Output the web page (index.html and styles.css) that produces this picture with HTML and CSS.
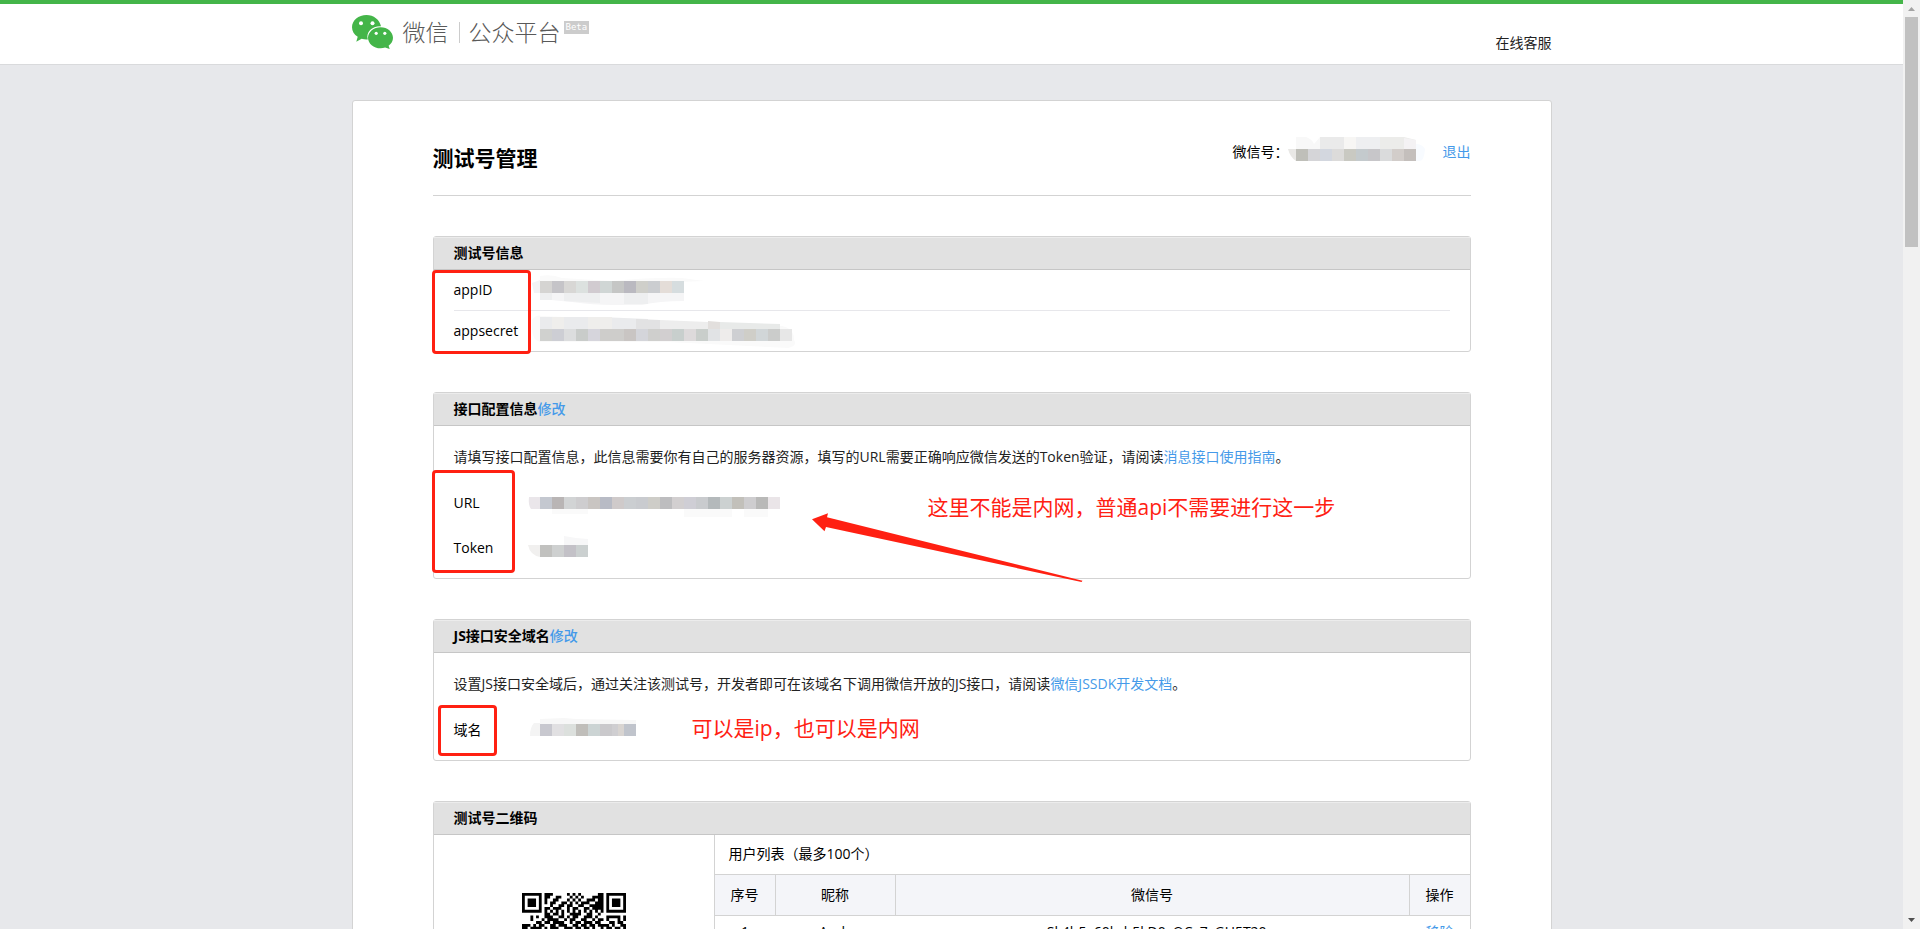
FILE: index.html
```html
<!DOCTYPE html>
<html lang="zh-CN">
<head>
<meta charset="utf-8">
<title>微信公众平台</title>
<link rel="stylesheet" href="styles.css">
</head>
<body>
<div class="window">
<div class="page">
  <header class="head">
    <div class="wrap head-inner">
      <a class="logo" href="#">
        <svg class="logo-mark" viewBox="0 0 41 34" width="41" height="34" aria-hidden="true">
          <path fill="#44b549" d="M14.5 0C6.500 0 0 5.300 0 12.200c0 4 2.200 7.300 5.700 9.600L4.300 26.700l5.300-2.900c1.700.5 3.200.8 4.900.8h1.300C13.600 16.500 20.500 10.900 29 11.300 27.700 4.700 21.600 0 14.500 0z"/>
          <path fill="#44b549" d="M28.600 12.200C21.700 12.200 16 16.900 16 22.700s5.700 10.600 12.600 10.600c1.600 0 3.100-.3 4.500-.8l4.600 1.500-1.100-3.300c2.800-2 4.400-4.700 4.400-8 0-5.800-5.500-10.500-12.400-10.500z"/>
          <circle cx="9" cy="8.300" r="2" fill="#fff"/><circle cx="20.500" cy="8.300" r="2" fill="#fff"/>
          <circle cx="24.200" cy="18.300" r="1.600" fill="#fff"/><circle cx="32.800" cy="18.300" r="1.600" fill="#fff"/>
        </svg>
        <span class="logo-text">微信</span>
        <span class="logo-bar"></span>
        <span class="logo-text">公众平台</span>
        <span class="beta">Beta</span>
      </a>
      <a class="service" href="#">在线客服</a>
    </div>
  </header>

  <main class="wrap card">
    <div class="title-row">
      <h1>测试号管理</h1>
      <div class="account">
        <span>微信号：</span>
        <svg class="mosaic" width="137" height="24" viewBox="0 0 137 24" aria-hidden="true">
          <path fill="#f8f8f8" d="M8 0h10q6 2 8 7l6-7v12H8z"/><path fill="#eaeaea" d="M32 0h24v12H32z"/><path fill="#f7f6f4" d="M56 0h12v12H56z"/><path fill="#eeeff1" d="M68 0h24v12H68z"/><path fill="#ececea" d="M92 0h24l12 3v9H92z"/><path fill="#f4f2f4" d="M116 1l12 2v9h-12z"/>
          <path fill="#e9e8e6" d="M0 12h8v12Q2 20 0 12z"/><path fill="#bfbfb9" d="M8 12h12v12H8z"/><path fill="#d5d5d8" d="M20 12h12v12H20z"/><path fill="#d3d7df" d="M32 12h12v12H32z"/><path fill="#dcdbda" d="M44 12h12v12H44z"/><path fill="#c9c9c2" d="M56 12h12v12H56z"/><path fill="#c4cacd" d="M68 12h12v12H68z"/><path fill="#c7c6c9" d="M80 12h12v12H80z"/><path fill="#dadbdc" d="M92 12h12v12H92z"/><path fill="#d2cdca" d="M104 12h12v12h-12z"/><path fill="#c4bfbc" d="M116 12h12v12h-12z"/><path fill="#f8fbff" d="M128 7q6 0 9 5-1 12-5 12h-4z"/>
        </svg>
        <a href="#">退出</a>
      </div>
    </div>

    <section class="panel">
      <h2>测试号信息</h2>
      <dl class="info">
        <div class="info-row">
          <dt>appID</dt>
          <dd><svg class="mosaic" width="172" height="30" viewBox="0 0 172 30" aria-hidden="true">
            <path fill="#fafafa" d="M8 1Q20-1 30 3l50 3q45-4 70-3l22 3-24 1H8z"/>
            <path fill="#f5f5f6" d="M8 18h144v8q-25 0-42 4H82Q60 30 40 27L8 24z"/><path fill="#eeeff0" d="M8 18h12v7H8zM32 18h36v10l-36-2zM92 18h24v11H92z"/>
            <path fill="#f3f3f5" d="M0 8l8-3v13H2z"/><path fill="#d5d4d2" d="M8 6h12v12H8z"/><path fill="#c5c4c8" d="M20 6h12v12H20z"/><path fill="#d8d7d5" d="M32 6h12v12H32z"/><path fill="#dce1df" d="M44 6h12v12H44z"/><path fill="#d1cbd0" d="M56 6h12v12H56z"/><path fill="#d0d6d5" d="M68 6h12v12H68z"/><path fill="#c5c6c5" d="M80 6h12v12H80z"/><path fill="#bab9c0" d="M92 6h12v12H92z"/><path fill="#cfcfca" d="M104 6h12v12h-12z"/><path fill="#cbcdd0" d="M116 6h12v12h-12z"/><path fill="#e4ddd8" d="M128 6h12v12h-12z"/><path fill="#d6dddf" d="M140 6h12v12h-12z"/>
          </svg></dd>
        </div>
        <div class="info-row">
          <dt>appsecret</dt>
          <dd><svg class="mosaic" width="264" height="34" viewBox="0 0 264 34" aria-hidden="true">
            <path fill="#fafafa" d="M0 6Q4 0 10 2l90 4 150 6q12 2 12 14 4 6-6 8l-120-6H8Q0 26 0 14z"/>
            <path fill="#eaebed" d="M8 3h60l48 2v10H8z"/><path fill="#efeeec" d="M20 3h12v12H20zM56 3h24v12H56z"/><path fill="#e2e2e3" d="M104 5l24 1v9h-24z"/><path fill="#ededed" d="M128 6l48 2v7h-48z"/><path fill="#e2dfdd" d="M176 7l12 1v7h-12z"/><path fill="#e8eae9" d="M188 8l60 2v5h-60z"/>
            <path fill="#d0d1cf" d="M8 15h12v12H8z"/><path fill="#cdced4" d="M20 15h12v12H20z"/><path fill="#dcddde" d="M32 15h12v12H32z"/><path fill="#c9ccca" d="M44 15h12v12H44z"/><path fill="#d6d5dc" d="M56 15h12v12H56z"/><path fill="#cecdcb" d="M68 15h24v12H68z"/><path fill="#c9c5c3" d="M92 15h12v12H92z"/><path fill="#d4d5da" d="M104 15h12v12h-12z"/><path fill="#cfcfcd" d="M116 15h12v12h-12z"/><path fill="#d2cfd0" d="M128 15h12v12h-12z"/><path fill="#c8cfcd" d="M140 15h12v12h-12z"/><path fill="#dddadb" d="M152 15h12v12h-12z"/><path fill="#c9cecb" d="M164 15h12v12h-12z"/><path fill="#e1e3e5" d="M176 15h12v12h-12z"/><path fill="#eeeceb" d="M188 15h12v12h-12z"/><path fill="#cecfd2" d="M200 15h12v12h-12z"/><path fill="#cfcec8" d="M212 15h12v12h-12z"/><path fill="#d1d6d8" d="M224 15h12v12h-12z"/><path fill="#cbcccb" d="M236 15h12v12h-12z"/><path fill="#e7e7e7" d="M248 15h12v12h-12z"/>
          </svg></dd>
        </div>
      </dl>
      <span class="mark mark-app"></span>
    </section>

    <section class="panel">
      <h2>接口配置信息<a href="#">修改</a></h2>
      <div class="body">
        <p>请填写接口配置信息，此信息需要你有自己的服务器资源，填写的URL需要正确响应微信发送的Token验证，请阅读<a href="#">消息接口使用指南</a>。</p>
        <dl class="fields">
          <div class="field">
            <dt>URL</dt>
            <dd><svg class="mosaic" width="252" height="24" viewBox="0 0 252 24" aria-hidden="true">
              <path fill="#fafafa" d="M24 18h36v5H24zM156 18h48v8h-48zM216 18h24v8h-24z"/>
              <path fill="#eae6ea" d="M1 6h11v12H3Q0 14 1 6z"/><path fill="#c4c8d0" d="M12 6h12v12H12z"/><path fill="#b9b5b5" d="M24 6h12v12H24z"/><path fill="#d2d4d5" d="M36 6h12v12H36z"/><path fill="#cecdcf" d="M48 6h12v12H48z"/><path fill="#c9c5c2" d="M60 6h12v12H60z"/><path fill="#b8bbc5" d="M72 6h12v12H72z"/><path fill="#cfcaca" d="M84 6h12v12H84z"/><path fill="#cbced1" d="M96 6h12v12H96z"/><path fill="#c9cbcf" d="M108 6h12v12h-12z"/><path fill="#cecdc8" d="M120 6h12v12h-12z"/><path fill="#bdbdbf" d="M132 6h12v12h-12z"/><path fill="#d2cfd0" d="M144 6h12v12h-12z"/><path fill="#cfced5" d="M156 6h12v12h-12z"/><path fill="#c9cbce" d="M168 6h12v12h-12z"/><path fill="#b4b9bb" d="M180 6h12v12h-12z"/><path fill="#ccd1d1" d="M192 6h12v12h-12z"/><path fill="#c2c0ba" d="M204 6h12v12h-12z"/><path fill="#cecdcf" d="M216 6h12v12h-12z"/><path fill="#b9b9b8" d="M228 6h12v12h-12z"/><path fill="#eae5e8" d="M240 6h12v12h-12z"/>
            </svg></dd>
          </div>
          <div class="field">
            <dt>Token</dt>
            <dd><svg class="mosaic" width="60" height="24" viewBox="0 0 60 24" aria-hidden="true">
              <path fill="#f7f7f8" d="M36 0l12 2 12 1v7H36z"/><path fill="#f1f0ef" d="M0 9h12v12Q2 19 0 9z"/><path fill="#c1c1bf" d="M12 9h12v12H12z"/><path fill="#ced0d0" d="M24 9h12v12H24z"/><path fill="#c3c1c7" d="M36 9h12v12H36z"/><path fill="#cbd0d0" d="M48 9h12v12H48z"/>
            </svg></dd>
          </div>
        </dl>
      </div>
      <span class="mark mark-url"></span>
      <span class="note note-url">这里不能是内网，普通api不需要进行这一步</span>
      <svg class="arrow" width="271" height="70" viewBox="0 0 271 70" aria-hidden="true"><path fill="#ff2012" d="M0 6.300L16 .3 15 4.300 270.500 67.700 269.500 69 14 14 12.500 18.300z"/></svg>
    </section>

    <section class="panel">
      <h2>JS接口安全域名<a href="#">修改</a></h2>
      <div class="body">
        <p>设置JS接口安全域后，通过关注该测试号，开发者即可在该域名下调用微信开放的JS接口，请阅读<a href="#">微信JSSDK开发文档</a>。</p>
        <dl class="fields">
          <div class="field">
            <dt>域名</dt>
            <dd><svg class="mosaic" width="108" height="24" viewBox="0 0 108 24" aria-hidden="true">
              <path fill="#f7f7f7" d="M12 1l24-1 12 1 60 1v5H12z"/><path fill="#f4f4f4" d="M6 5h6v13H2Q2 9 6 5z"/><path fill="#c8c8cf" d="M12 6h12v12H12z"/><path fill="#e1e0e2" d="M24 6h12v12H24z"/><path fill="#dce0dd" d="M36 6h12v12H36z"/><path fill="#c0beba" d="M48 6h12v12H48z"/><path fill="#ccd4d4" d="M60 6h12v12H60z"/><path fill="#cac9cc" d="M72 6h12v12H72z"/><path fill="#cfced1" d="M84 6h6v12h-6z"/><path fill="#d8d4d1" d="M90 6h6v12h-6z"/><path fill="#c0c4cc" d="M96 6h12v12H96z"/>
            </svg></dd>
          </div>
        </dl>
      </div>
      <span class="mark mark-domain"></span>
      <span class="note note-domain">可以是ip，也可以是内网</span>
    </section>

    <section class="panel">
      <h2>测试号二维码</h2>
      <div class="qr-layout">
        <div class="qr-box"><svg class="qr" viewBox="0 0 37 37" width="104" height="104" role="img" aria-label="二维码"><path id="qr-path"/></svg></div>
        <div class="users">
          <h3>用户列表（最多100个）</h3>
          <table>
            <thead><tr><th class="col-no">序号</th><th class="col-name">昵称</th><th>微信号</th><th class="col-op">操作</th></tr></thead>
            <tbody><tr><td>1</td><td>Andy</td><td>oSk4h5x60kzh5kD0yOCx7sGU5T20</td><td><a href="#">移除</a></td></tr></tbody>
          </table>
        </div>
      </div>
    </section>
  </main>
</div>
<div class="scrollbar" aria-hidden="true">
  <svg width="17" height="17" viewBox="0 0 17 17"><path fill="#a3a3a3" d="M5 11h7L8.500 7z"/></svg>
  <span class="thumb"></span>
  <svg class="down" width="17" height="17" viewBox="0 0 17 17"><path fill="#505050" d="M5 6h7L8.500 10z"/></svg>
</div>
</div>
<script src="qr.js"></script>
</body>
</html>
```
FILE: styles.css
```css
* { box-sizing: border-box; }

body {
  margin: 0;
  font: 14px/20px "Open Sans", "Noto Sans CJK SC", sans-serif;
  color: #000;
}

h1, h2, h3, p, dl, dd { margin: 0; }
a { color: #459ae9; text-decoration: none; }

.window { display: flex; height: 100vh; overflow: hidden; }
.page { flex: 1; min-width: 0; overflow: hidden; background: #e7e8eb; }
.wrap { width: 100%; max-width: 1200px; margin: 0 auto; }

.head { background: #fff; border-top: 4px solid #44b549; border-bottom: 1px solid #d9dadc; }
.head-inner { display: flex; justify-content: space-between; height: 60px; }
.logo { display: flex; align-items: flex-start; padding-top: 11px; color: #595959; }
.logo-mark { margin-right: 10px; }
.logo-text { font-family: "Noto Sans CJK SC", sans-serif; font-weight: 300; font-size: 23px; line-height: 32px; }
.logo-bar { width: 1px; height: 21px; margin: 7px 9px 0 10px; background: #ccc; }
.beta { margin: 6px 0 0 3px; padding: 0 2px; height: 13px; background: #ccc; color: #fff; font: 9px/13px "DejaVu Sans Mono", monospace; }
.service { align-self: flex-start; padding-top: 29px; color: #222; }

.card { margin-top: 35px; padding: 0 80px 80px; background: #fff; border: 1px solid #d3d3d3; border-radius: 3px; }
.title-row { display: flex; justify-content: space-between; height: 95px; border-bottom: 1px solid #d3d3d3; }
h1 { padding-top: 42px; font-size: 21px; line-height: 30px; }
.account { display: flex; align-items: flex-start; padding-top: 41px; }
.account .mosaic { margin: -5px 18px 0 -1px; }
.mosaic { display: block; overflow: visible; }

.panel { position: relative; margin-top: 40px; border: 1px solid #d3d3d3; border-radius: 3px; }
h2 { padding: 6px 20px; font-size: 14px; line-height: 20px; background: #e1e1e1; border-bottom: 1px solid #c6c6c6; box-shadow: inset 0 1px #ececec; }
h2 a { font-weight: 500; }

.info { padding: 0 20px; }
.info-row { display: flex; align-items: center; height: 40px; }
.info-row + .info-row { height: 41px; border-top: 1px solid #e7e7eb; }
.info dt { width: 78px; }

.body { padding: 21px 20px 8px; color: #222; }
.fields { padding-top: 13px; color: #000; }
.field { display: flex; align-items: center; height: 45px; }
.field dt { width: 74px; }

.mark { position: absolute; border: 3px solid #ff2012; border-radius: 4px; }
.mark-app { left: -2px; top: 33px; width: 99px; height: 84px; }
.mark-url { left: -2px; top: 77px; width: 83px; height: 103px; }
.mark-domain { left: 4px; top: 85px; width: 59px; height: 51px; }
.note { position: absolute; color: #ff2012; font-size: 21px; line-height: 30px; white-space: nowrap; }
.note-url { left: 494px; top: 99px; }
.note-domain { left: 258px; top: 93px; }
.arrow { position: absolute; left: 378px; top: 120px; }

.qr-layout { display: flex; }
.qr-box { display: flex; justify-content: center; width: 281px; padding: 58px 0 100px; border-right: 1px solid #d3d3d3; }
.users { flex: 1; }
h3 { padding: 9px 14px 10px; font-size: 14px; font-weight: 400; line-height: 20px; border-bottom: 1px solid #d3d3d3; }
table { width: 100%; border-collapse: separate; border-spacing: 0; table-layout: fixed; text-align: center; }
th { padding: 10px 0; font-weight: 400; background: #f4f5f9; border-right: 1px solid #d3d3d3; border-bottom: 1px solid #d3d3d3; }
th:last-child { border-right: 0; }
td { padding: 6px 0 13px; }
.col-no { width: 61px; }
.col-name { width: 120px; }
.col-op { width: 60px; }

.scrollbar { display: flex; flex-direction: column; width: 17px; background: #f1f1f1; }
.scrollbar svg { display: block; flex: none; }
.thumb { height: 230px; margin: 0 2px; background: #c1c1c1; }
.down { margin-top: auto; }
```
FILE: qr.js
```js
const rows = [
  "1111111011100000101010000001101111111",
  "1000001011001100010101000111101000001",
  "1011101010011000101010011101101011101",
  "1011101010110011010101110011101011101",
  "1011101000100110110011001111101011101",
  "1000001011011100101100110111101000001",
  "1111111010101010101010101010101111111",
  "0000000011011010011110011001000000000",
  "0001010011100110101100111010001111101",
  "0001000101111001011001100101101000101",
  "0000011011011110010110111011000110110",
  "1110101100110111001101101101111010011",
  "1101111010111001110110110100101101101"
];
let d = "";
rows.forEach((row, y) => {
  [...row].forEach((cell, x) => {
    if (cell === "1") d += `M${x} ${y}h1v1h-1z`;
  });
});
document.getElementById("qr-path").setAttribute("d", d);
```
